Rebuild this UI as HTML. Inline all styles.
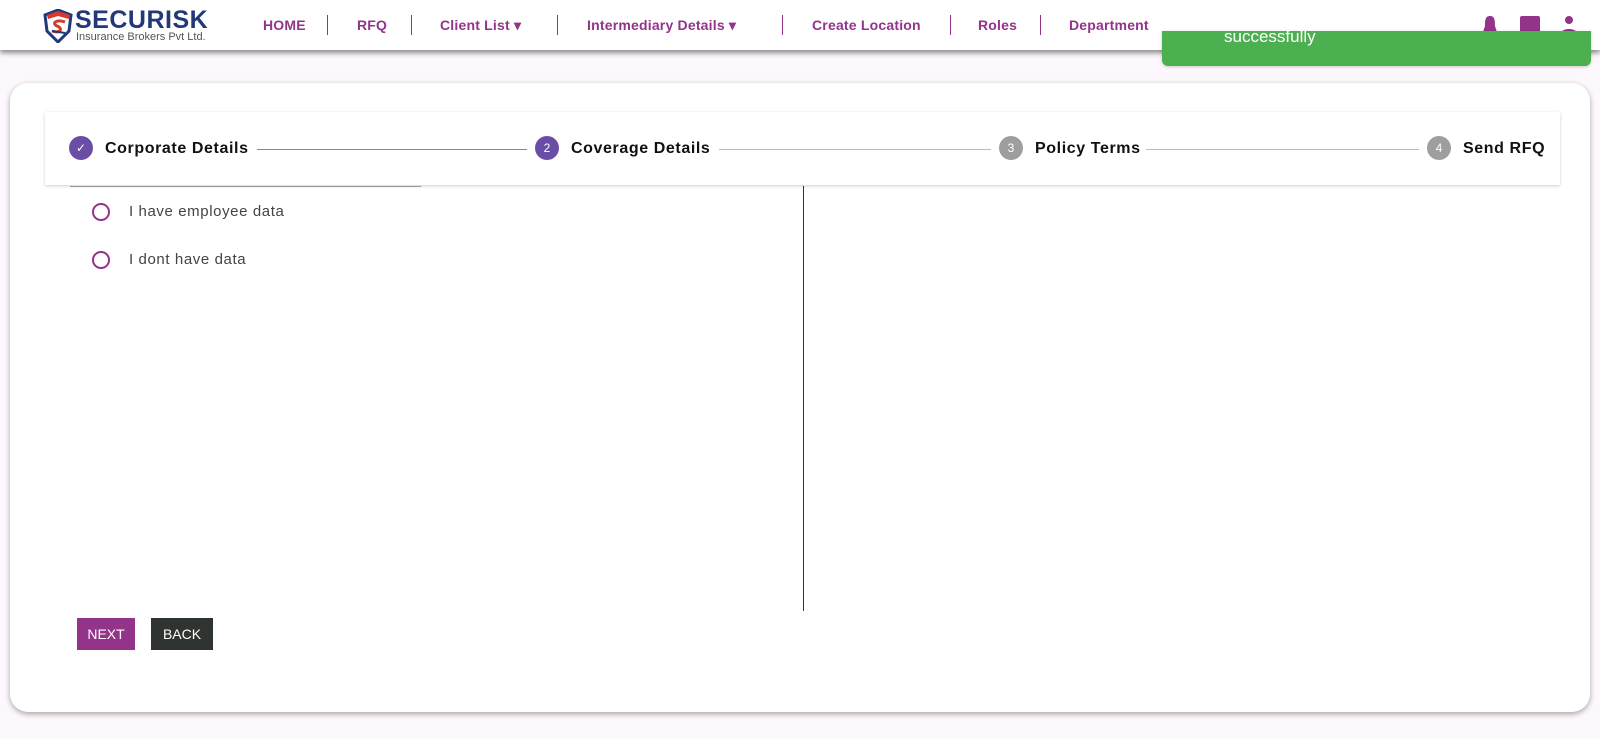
<!DOCTYPE html>
<html><head><meta charset="utf-8"><style>
*{box-sizing:border-box;margin:0;padding:0}
body{width:1600px;height:739px;background:#fdf8fd;font-family:"Liberation Sans",sans-serif;position:relative;overflow:hidden}
.hdr{position:absolute;left:0;top:0;width:1600px;height:50px;background:#fff;box-shadow:0 3px 5px rgba(0,0,0,.45)}
.nav{position:absolute;top:17px;font-size:14px;font-weight:bold;color:#93338a;white-space:nowrap;letter-spacing:.2px}
.sep{position:absolute;top:15px;width:1px;height:20px;background:#93338a}
.card{position:absolute;left:10px;top:83px;width:1580px;height:629px;background:#fff;border-radius:18px;box-shadow:0 2px 6px rgba(0,0,0,.35)}
.step{position:absolute;left:45px;top:112px;width:1515px;height:73px;background:#fff;box-shadow:0 1px 3px rgba(0,0,0,.2)}
.c{position:absolute;top:24px;width:24px;height:24px;border-radius:50%;color:#fff;font-size:12px;text-align:center;line-height:24px}
.lbl{position:absolute;top:28px;font-size:16px;font-weight:bold;color:#111;letter-spacing:.6px}
.ln{position:absolute;top:37px;height:1px;background:#bbb}
.radio{position:absolute;left:92px;width:18px;height:18px;border:2px solid #93338a;border-radius:50%}
.rt{position:absolute;left:129px;font-size:15px;color:#444;letter-spacing:.6px}
.btn{position:absolute;top:618px;height:32px;color:#fff;font-size:14px;line-height:32px;text-align:center}
</style></head><body>
<div class="hdr">
<svg style="position:absolute;left:43px;top:9px" width="30" height="34" viewBox="0 0 30 34"><path d="M15 1 L28 6 L26 22 L15 33 L4 22 L2 6Z" fill="#fff" stroke="#1f3a7a" stroke-width="3"/><path d="M4 6 L15 2 L27 6 L26 10 L15 7 L5 10Z" fill="#d63a2c"/><path d="M22 13 C14 10 8 14 14 17 C20 19 18 25 9 22" fill="none" stroke="#d63a2c" stroke-width="3"/><path d="M9 22 L22 24" stroke="#1f3a7a" stroke-width="2"/></svg>
<div style="position:absolute;left:75px;top:6px;font-size:25px;font-weight:bold;color:#22387a;letter-spacing:.5px">SECURISK</div>
<div style="position:absolute;left:76px;top:31px;font-size:11px;color:#555">Insurance Brokers Pvt Ltd.</div>
<div class="nav" style="left:263px">HOME</div><div class="sep" style="left:327px"></div>
<div class="nav" style="left:357px">RFQ</div><div class="sep" style="left:411px"></div>
<div class="nav" style="left:440px">Client List ▾</div><div class="sep" style="left:557px"></div>
<div class="nav" style="left:587px">Intermediary Details ▾</div><div class="sep" style="left:782px"></div>
<div class="nav" style="left:812px">Create Location</div><div class="sep" style="left:950px"></div>
<div class="nav" style="left:978px">Roles</div><div class="sep" style="left:1040px"></div>
<div class="nav" style="left:1069px">Department</div>
<svg style="position:absolute;left:1480px;top:15px" width="20" height="20" viewBox="0 0 20 20"><path d="M10 1 C5 1 5 6 5 11 L3 17 H17 L15 11 C15 6 15 1 10 1Z" fill="#93338a"/></svg>
<div style="position:absolute;left:1520px;top:16px;width:20px;height:18px;background:#93338a;border-radius:2px"></div>
<svg style="position:absolute;left:1558px;top:15px" width="22" height="20" viewBox="0 0 22 20"><circle cx="11" cy="5" r="4" fill="#93338a"/><path d="M2 20 C2 12 20 12 20 20Z" fill="#93338a"/></svg>
</div>
<div style="position:absolute;left:1162px;top:31px;width:429px;height:35px;background:#4caf50;border-radius:0 0 6px 6px;box-shadow:0 1px 3px rgba(0,0,0,.2)"><div style="position:absolute;left:62px;top:-4px;color:#fff;font-size:17px">successfully</div></div>
<div class="card"></div>
<div class="step">
<div class="c" style="left:24px;background:#6a4ea5">✓</div><div class="lbl" style="left:60px">Corporate Details</div>
<div class="ln" style="left:212px;width:270px;background:#8e7cc3"></div>
<div class="c" style="left:490px;background:#6a4ea5">2</div><div class="lbl" style="left:526px">Coverage Details</div>
<div class="ln" style="left:674px;width:272px"></div>
<div class="c" style="left:954px;background:#9e9e9e">3</div><div class="lbl" style="left:990px">Policy Terms</div>
<div class="ln" style="left:1101px;width:273px"></div>
<div class="c" style="left:1382px;background:#9e9e9e">4</div><div class="lbl" style="left:1418px">Send RFQ</div>
</div>
<div style="position:absolute;left:70px;top:186px;width:351px;height:1px;background:#999"></div>
<div style="position:absolute;left:803px;top:186px;width:1px;height:425px;background:#333"></div>
<div class="radio" style="top:203px"></div><div class="rt" style="top:203px">I have employee data</div>
<div class="radio" style="top:251px"></div><div class="rt" style="top:251px">I dont have data</div>
<div class="btn" style="left:77px;width:58px;background:#93338a">NEXT</div>
<div class="btn" style="left:151px;width:62px;background:#2f3430">BACK</div>
</body></html>
